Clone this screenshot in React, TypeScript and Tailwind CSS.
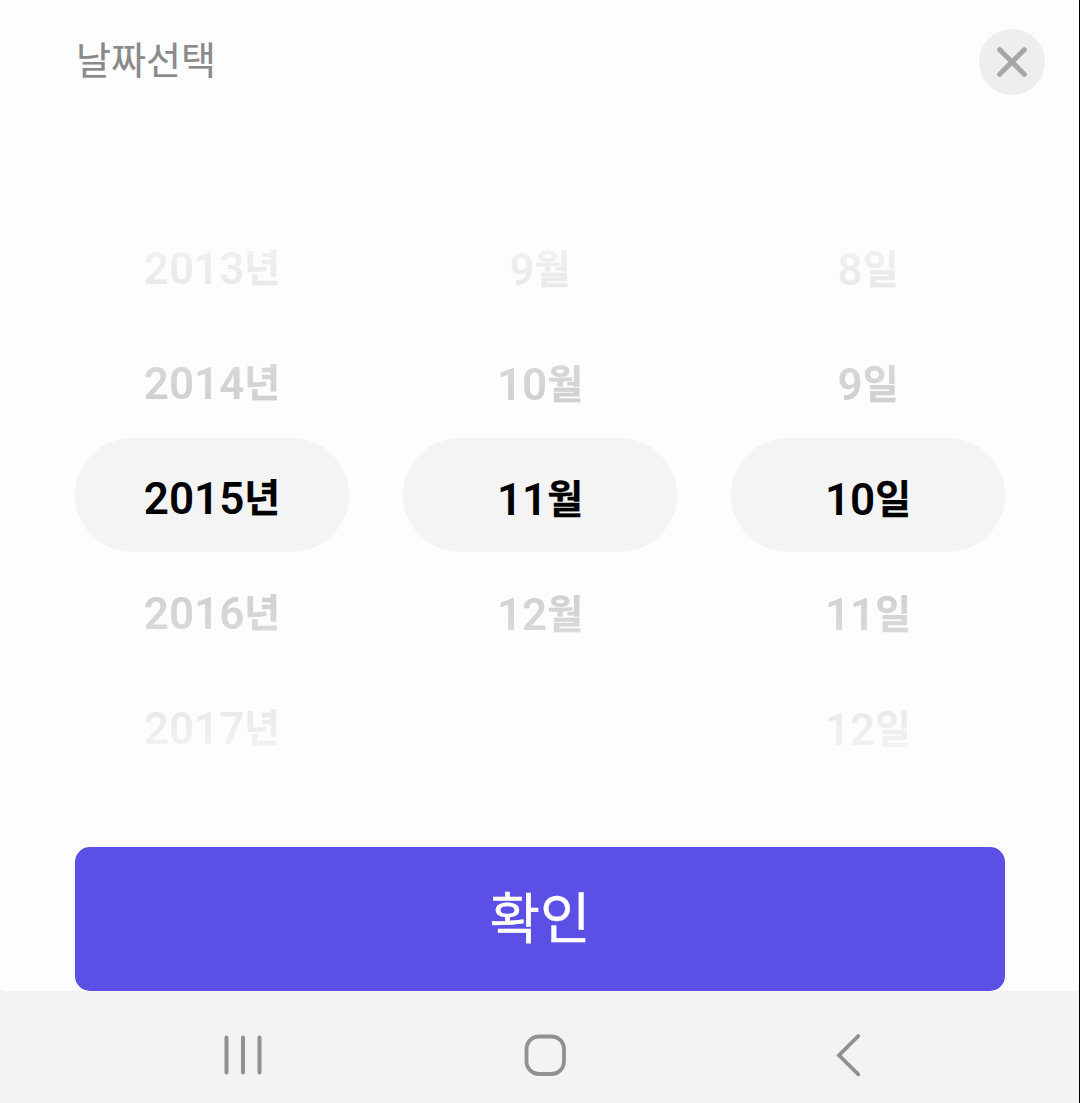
type WheelProps = {
  unit: string;
  before: number[];
  selected: number;
  after: number[];
  offset: string;
};

const ROW = 'flex h-[115px] items-center justify-center whitespace-nowrap';

function Label({ value, unit, offset }: { value: number; unit: string; offset: string }) {
  return (
    <span className={`flex ${offset}`}>
      <span>{value}</span>
      <span className="pt-[3px] text-[39px] leading-none [-webkit-text-stroke:0.3px]">{unit}</span>
    </span>
  );
}

function Wheel({ unit, before, selected, after, offset }: WheelProps) {
  return (
    <div className="flex w-[274px] flex-col text-[44px] leading-none font-semibold">
      <div className="text-[#c7c7c7] [mask-image:linear-gradient(to_bottom,transparent_-11px,black_230px)]">
        {before.map((value) => (
          <div key={value} className={ROW}>
            <Label value={value} unit={unit} offset={offset} />
          </div>
        ))}
      </div>
      <div className="flex h-[114px] items-center justify-center rounded-full bg-[#f4f4f4] pt-px whitespace-nowrap text-black">
        <Label value={selected} unit={unit} offset={offset} />
      </div>
      <div className="h-[231px] pt-px text-[#c7c7c7] [mask-image:linear-gradient(to_top,transparent_-11px,black_230px)]">
        {after.map((value) => (
          <div key={value} className={ROW}>
            <Label value={value} unit={unit} offset={offset} />
          </div>
        ))}
      </div>
    </div>
  );
}

export default function App() {
  return (
    <div
      lang="ko"
      className="flex h-[1103px] w-[1080px] flex-col overflow-hidden border-r border-black bg-[#f3f3f3] font-['Roboto','Noto_Sans_CJK_KR',sans-serif]"
    >
      <main className="flex h-[991px] flex-col rounded-b-[5px] bg-[#fdfdfd]">
        <header className="flex h-[208px] items-start justify-between pt-[29px] pr-[34px] pl-[76px]">
          <h1 className="pt-[12px] text-[38px] leading-[40px] font-normal text-[#8a8a8a] [-webkit-text-stroke:0.2px_#8a8a8a]">
            날짜선택
          </h1>
          <button
            type="button"
            aria-label="닫기"
            className="flex size-[66px] items-center justify-center rounded-full bg-[#eeeeee]"
          >
            <svg width="32" height="32" viewBox="0 0 32 32" fill="none" stroke="#a6a6a6" strokeWidth="5" strokeLinecap="round">
              <path d="M3.7 3.7 28.3 28.3M28.3 3.7 3.7 28.3" />
            </svg>
          </button>
        </header>

        <section className="flex h-[639px] justify-between pr-[74px] pl-[75px]">
          <Wheel unit="년" before={[2013, 2014]} selected={2015} after={[2016, 2017]} offset="pt-[6px]" />
          <Wheel unit="월" before={[9, 10]} selected={11} after={[12]} offset="pt-[8px]" />
          <Wheel unit="일" before={[8, 9]} selected={10} after={[11, 12]} offset="pt-[8px]" />
        </section>

        <button
          type="button"
          className="mr-[74px] ml-[75px] flex h-[144px] items-center justify-center rounded-[15px] bg-[#5b4fe5] pt-[1px] text-[55px] leading-none font-normal text-white [-webkit-text-stroke:0.4px_white]"
        >
          확인
        </button>
      </main>

      <nav className="h-[112px]">
        <div className="flex h-full items-center pt-[16px] pl-[223px]">
          <svg width="40" height="42" viewBox="0 0 40 42" fill="none" stroke="#919191" strokeWidth="4" strokeLinecap="round">
            <path d="M3.5 3.5V38.5M20 3.5V38.5M36.5 3.5V38.5" />
          </svg>
          <svg className="ml-[261px]" width="42" height="42" viewBox="0 0 42 42" fill="none" stroke="#919191" strokeWidth="3.8">
            <rect x="2.5" y="2.5" width="37.5" height="37.5" rx="12.5" />
          </svg>
          <svg className="ml-[270px]" width="26" height="44" viewBox="0 0 26 44" fill="none" stroke="#919191" strokeWidth="3.8" strokeLinecap="round">
            <path d="M22.3 3 3 22.3 22.3 41.3" />
          </svg>
        </div>
      </nav>
    </div>
  );
}
